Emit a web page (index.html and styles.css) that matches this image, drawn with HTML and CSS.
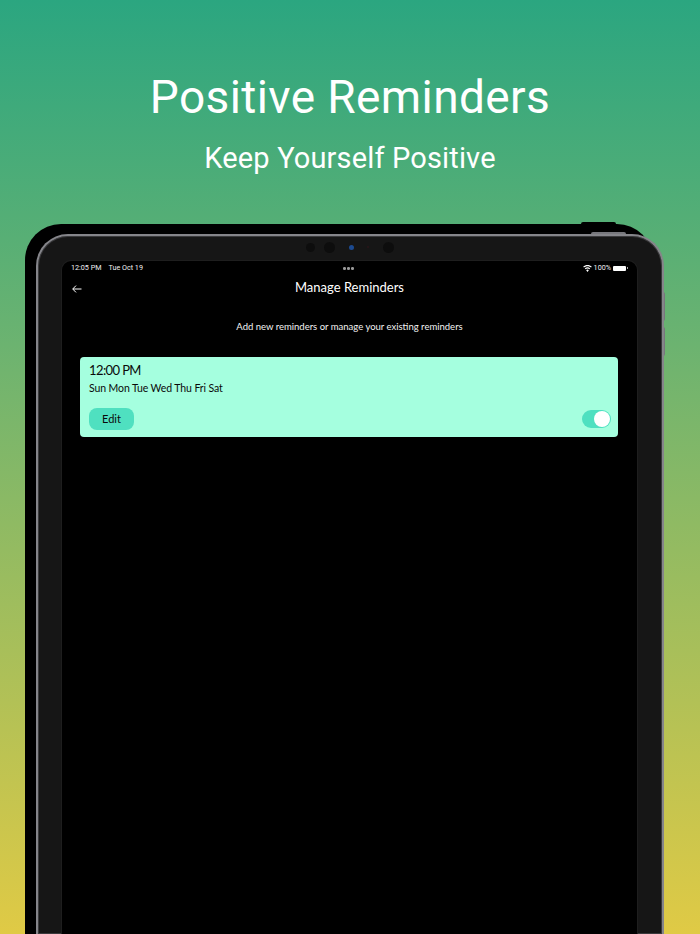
FILE: index.html
```html
<!DOCTYPE html>
<html lang="en">
<head>
<meta charset="utf-8">
<title>Positive Reminders</title>
<link rel="stylesheet" href="styles.css">
</head>
<body>
<header class="hero">
  <h1 class="hero-title">Positive Reminders</h1>
  <p class="hero-sub">Keep Yourself Positive</p>
</header>
<div class="device">
  <span class="btn-top-black"></span>
  <span class="btn-top"></span>
  <span class="btn-side btn-side-1"></span>
  <span class="btn-side btn-side-2"></span>
  <div class="frame">
    <div class="cameras">
      <span class="cam cam-a"></span>
      <span class="cam cam-b"></span>
      <span class="cam cam-blue"></span>
      <span class="cam cam-dot"></span>
      <span class="cam cam-c"></span>
    </div>
    <main class="screen">
      <div class="status">
        <div class="status-left"><span>12:05 PM</span><span>Tue Oct 19</span></div>
        <div class="status-dots"><i></i><i></i><i></i></div>
        <div class="status-right">
          <svg class="wifi" width="9" height="7" viewBox="0 0 18 14"><path fill="#fff" d="M9 0C5.6 0 2.6 1.3.4 3.5l1.6 1.7C3.8 3.4 6.3 2.3 9 2.3s5.2 1.1 7 2.9l1.6-1.7C15.4 1.3 12.4 0 9 0zm0 4.6c-2.1 0-4 .8-5.4 2.2l1.6 1.7c1-1 2.3-1.6 3.8-1.6s2.8.6 3.8 1.6l1.6-1.7C13 5.4 11.1 4.6 9 4.6zm0 4.6c-1 0-2 .4-2.6 1.1L9 14l2.6-3.7C11 9.6 10 9.2 9 9.2z"/></svg>
          <span>100%</span>
          <span class="battery"></span>
        </div>
      </div>
      <div class="nav">
        <svg class="back" width="10" height="8" viewBox="0 0 10 8"><path d="M9.5 4H.9M4 .6.7 4 4 7.4" fill="none" stroke="#fff" stroke-width="1"/></svg>
        <h2 class="nav-title">Manage Reminders</h2>
      </div>
      <p class="intro">Add new reminders or manage your existing reminders</p>
      <section class="card">
        <div class="card-time">12:00 PM</div>
        <div class="card-days">Sun Mon Tue Wed Thu Fri Sat</div>
        <div class="card-actions">
          <button class="edit">Edit</button>
          <span class="toggle"><span class="knob"></span></span>
        </div>
      </section>
    </main>
  </div>
</div>
</body>
</html>
```

FILE: styles.css
```css
* { box-sizing: border-box; }
html, body { margin: 0; padding: 0; height: 934px; }
body {
  width: 700px;
  overflow: hidden;
  font-family: "Lato", "Liberation Sans", sans-serif;
  background: linear-gradient(180deg, #2ba680 0%, #6cb370 37%, #e0ca45 100%);
  color: #fff;
}
.hero { padding-top: 68px; text-align: center; height: 234px; }
.hero-title {
  margin: 0;
  font: 400 46px/58px "Roboto", sans-serif;
  letter-spacing: .4px;
}
.hero-sub {
  margin: 13px 0 0;
  font: 400 29px/38px "Roboto", sans-serif;
  letter-spacing: .15px;
}
.device { position: relative; margin-left: 36px; width: 628px; height: 700px; }
.device::before {
  content: "";
  position: absolute;
  left: -11px; top: -10px; right: 11px; bottom: 0;
  background: #000;
  border-radius: 36px 36px 0 0;
}
.btn-top-black { position: absolute; left: 545px; top: -12px; width: 35px; height: 4px; background: #000; border-radius: 2px 2px 0 0; }
.btn-top { position: absolute; left: 555px; top: -2px; width: 35px; height: 4px; background: #77777c; border-radius: 2px 2px 0 0; }
.btn-side { position: absolute; left: 626px; width: 3px; background: #77777c; border-radius: 0 2px 2px 0; }
.btn-side-1 { top: 58px; height: 29px; }
.btn-side-2 { top: 93px; height: 29px; }
.frame {
  position: relative;
  height: 100%;
  padding: 25px 25px 0 24px;
  background: #161616;
  border: 2px solid #85858a;
  border-bottom: 0;
  border-radius: 32px 32px 0 0;
  box-shadow: inset 0 0 0 1px #3a3a3c;
}
.cameras { position: absolute; top: 0; left: 0; right: 0; height: 23px; }
.cam { position: absolute; border-radius: 50%; background: #0d0d0d; }
.cam-a { left: 268px; top: 7px; width: 9px; height: 9px; }
.cam-b { left: 286px; top: 6px; width: 11px; height: 11px; }
.cam-blue { left: 311px; top: 9px; width: 5px; height: 5px; background: #1c4a90; }
.cam-dot { left: 329px; top: 10px; width: 2px; height: 2px; background: #2a1518; }
.cam-c { left: 345px; top: 6px; width: 11px; height: 11px; }
.screen {
  height: 100%;
  background: #000;
  border-radius: 9px 9px 0 0;
  padding: 0 9px;
  position: relative;
  box-shadow: 0 0 0 1px #1e1e1e;
}
.status {
  display: flex;
  align-items: center;
  justify-content: space-between;
  height: 14px;
  font: 400 7.2px/14px "Roboto", sans-serif;
  color: #f0f0f0;
  position: relative;
}
.status-left { display: flex; gap: 7px; }
.status-dots { display: flex; gap: 1.5px; position: absolute; left: 272px; top: 6px; }
.status-dots i { width: 2.5px; height: 2.5px; border-radius: 50%; background: #9a9a9a; }
.status-right { display: flex; align-items: center; gap: 2px; }
.battery { position: relative; display: block; width: 13px; height: 5px; margin-right: 2px; border-radius: 1px; background: #fff; }
.battery::after { content: ""; position: absolute; left: 13.5px; top: 1.5px; width: 1px; height: 2px; background: #aaa; }
.nav { position: relative; height: 26px; display: flex; align-items: flex-start; justify-content: center; }
.back { position: absolute; left: 1px; top: 10px; }
.nav-title { margin: 0; font: 400 13px/24px "Lato", sans-serif; color: #fff; }
.intro { margin: 18px 0 0; text-align: center; font: 400 9.5px/15px "Lato", sans-serif; color: #f2f2f2; }
.card {
  margin: 23px 10px 0 9px;
  height: 80px;
  padding: 5px 7px 0 9px;
  background: #a5ffdf;
  border-radius: 4px;
  color: #0a0a0a;
}
.card-time { font: 400 13px/17px "Lato", sans-serif; letter-spacing: -.6px; }
.card-days { margin-top: 2px; font: 400 10.5px/14px "Lato", sans-serif; letter-spacing: -.1px; }
.card-actions { display: flex; align-items: center; justify-content: space-between; margin-top: 13px; }
.edit {
  width: 45px; height: 22px;
  padding: 0;
  border: 0;
  border-radius: 8px;
  background: #4fe0c0;
  color: #0a0a0a;
  font: 400 11px/22px "Lato", sans-serif;
}
.toggle { position: relative; display: block; width: 29px; height: 18px; border-radius: 9px; background: #4fe0c0; }
.knob { position: absolute; right: 1px; top: 1px; width: 16px; height: 16px; border-radius: 50%; background: #fff; }
```
